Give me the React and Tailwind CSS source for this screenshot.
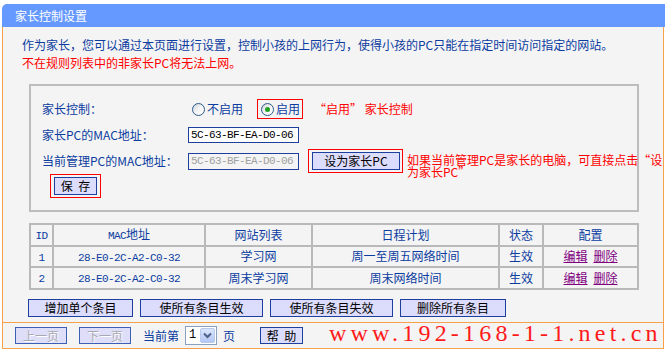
import React from "react";

const FONT = "font-['Noto_Sans_CJK_SC','Noto_Sans',sans-serif]";

function Radio({ checked }) {
  return (
    <span className="w-[13px] h-[13px] rounded-full border border-[#2d5b8c] bg-gradient-to-br from-[#cfd3d8] via-[#f4f4f4] to-white flex items-center justify-center shrink-0">
      {checked && <span className="w-[5px] h-[5px] rounded-full bg-[#22a322]" />}
    </span>
  );
}

function Btn({ children, className = "" }) {
  return (
    <div className={`h-[18px] shrink-0 border border-[#1f3f9f] bg-[#dcdcfc] text-black text-[12px] leading-[16px] flex items-center justify-center whitespace-pre ${className}`}>
      {children}
    </div>
  );
}

function DisBtn({ children, className = "" }) {
  return (
    <div className={`w-[52px] h-[17px] shrink-0 border border-[#3d5fb8] bg-[#dedef8] text-[#a9a9b4] text-[12px] leading-[15px] flex items-center justify-center [text-shadow:1px_1px_0_#ffffff] ${className}`}>
      {children}
    </div>
  );
}

function Mac({ children, className = "" }) {
  return (
    <span className={`font-['Liberation_Mono',monospace] text-[11px] tracking-[-0.6px] ${className}`}>{children}</span>
  );
}

const rows = [
  ["1", "28-E0-2C-A2-C0-32", "学习网", "周一至周五网络时间", "生效"],
  ["2", "28-E0-2C-A2-C0-32", "周末学习网", "周末网络时间", "生效"],
];

export default function App() {
  const blue = "text-[#0b3c9f]";
  const cell = "border-2 border-[#b9b9b9] h-[20px] p-0 text-center font-normal";
  return (
    <div className={`${FONT} relative w-[665px] h-[351px] bg-white overflow-hidden text-[12px]`}>
      {/* header */}
      <div className="mt-[4px] ml-[2px] h-[23px] bg-[#6699ff] rounded-tl-[5px] flex items-center pl-[13px] text-white text-[12px] leading-[23px]">
        家长控制设置
      </div>

      {/* body */}
      <div className="ml-[2px] w-[662px] h-[295px] border-x border-[#f7a24a] bg-[#f4f4f4] pt-[9px]">
        <div className={`pl-[19px] ${blue} leading-[18px]`}>
          作为家长，您可以通过本页面进行设置，控制小孩的上网行为，使得小孩的PC只能在指定时间访问指定的网站。
        </div>
        <div className="pl-[19px] text-[#ff0000] leading-[18px]">不在规则列表中的非家长PC将无法上网。</div>

        {/* inner box */}
        <div className="mt-[12px] ml-[26px] w-[610px] h-[128px] border-2 border-[#bdbdbd] pt-[10px]">
          {/* row 1 */}
          <div className="flex items-center h-[26px]">
            <div className={`w-[157px] shrink-0 pl-[11px] ${blue}`}>家长控制：</div>
            <div className="ml-[4px] shrink-0 flex items-center gap-[2px]">
              <Radio />
              <span className={blue}>不启用</span>
            </div>
            <div className="ml-[14px] shrink-0 w-[46px] h-[20px] border border-[#ff0000] flex items-center pl-[3px] gap-[2px]">
              <Radio checked />
              <span className={blue}>启用</span>
            </div>
            <div className="ml-[11px] shrink-0 text-[#ff0000]">“启用” 家长控制</div>
          </div>
          {/* row 2 */}
          <div className="flex items-center h-[26px]">
            <div className={`w-[157px] shrink-0 pl-[11px] ${blue}`}>家长PC的MAC地址：</div>
            <div className="w-[111px] shrink-0 h-[16px] border border-[#1f3f9f] bg-white flex items-center pl-[2px] text-black whitespace-nowrap">
              <Mac>5C-63-BF-EA-D0-06</Mac>
            </div>
          </div>
          {/* row 3 */}
          <div className="flex items-center h-[26px]">
            <div className={`w-[157px] shrink-0 pl-[11px] ${blue} whitespace-nowrap`}>当前管理PC的MAC地址：</div>
            <div className="w-[111px] shrink-0 h-[17px] border border-[#1f3f9f] bg-[#f4f4f4] flex items-center pl-[2px] text-[#a0a0a0] whitespace-nowrap">
              <Mac>5C-63-BF-EA-D0-06</Mac>
            </div>
            <div className="ml-[9px] shrink-0 border border-[#ff0000] pl-[3px] pr-[2px] py-[2px]">
              <Btn className="w-[88px]">设为家长PC</Btn>
            </div>
            <div className="ml-[4px] w-[256px] shrink-0 self-start mt-[6px] text-[#ff0000] leading-[12px]">
              如果当前管理PC是家长的电脑，可直接点击“设为家长PC”
            </div>
          </div>
          {/* row 4 */}
          <div className="h-[24px] flex">
            <div className="ml-[19px] border border-[#ff0000] px-[3px] py-[2px]">
              <Btn className="w-[43px]">{"保  存"}</Btn>
            </div>
          </div>
        </div>

        {/* table */}
        <table className={`mt-[11px] ml-[26px] w-[610px] border-collapse table-fixed ${blue}`}>
          <colgroup>
            <col className="w-[23px]" />
            <col className="w-[152px]" />
            <col className="w-[107px]" />
            <col className="w-[187px]" />
            <col className="w-[44px]" />
            <col />
          </colgroup>
          <thead>
            <tr>
              <th className={cell}><Mac>ID</Mac></th>
              <th className={cell}><Mac>MAC</Mac>地址</th>
              <th className={cell}>网站列表</th>
              <th className={cell}>日程计划</th>
              <th className={cell}>状态</th>
              <th className={cell}>配置</th>
            </tr>
          </thead>
          <tbody>
            {rows.map((r) => (
              <tr key={r[0]}>
                <td className={cell}><Mac>{r[0]}</Mac></td>
                <td className={cell}><Mac>{r[1]}</Mac></td>
                <td className={cell}>{r[2]}</td>
                <td className={cell}>{r[3]}</td>
                <td className={cell}>{r[4]}</td>
                <td className={cell}>
                  <span className="text-[#800080] underline">编辑</span>
                  <span className="ml-[6px] text-[#800080] underline">删除</span>
                </td>
              </tr>
            ))}
          </tbody>
        </table>

        {/* buttons */}
        <div className="mt-[9px] ml-[25px] flex gap-[7px]">
          <Btn className="w-[105px]">增加单个条目</Btn>
          <Btn className="w-[123px]">使所有条目生效</Btn>
          <Btn className="w-[123px]">使所有条目失效</Btn>
          <Btn className="w-[106px]">删除所有条目</Btn>
        </div>
      </div>

      {/* footer */}
      <div className="ml-[2px] w-[662px] h-[27px] border border-[#f7a24a] bg-[#f4f4f4] flex items-center pl-[12px]">
        <DisBtn>上一页</DisBtn>
        <DisBtn className="ml-[12px]">下一页</DisBtn>
        <span className={`ml-[12px] ${blue}`}>当前第</span>
        <div className="ml-[6px] w-[32px] h-[19px] border border-[#8aa0bf] bg-white flex items-center">
          <span className="pl-[3px] flex-1 text-black font-['Liberation_Mono',monospace] text-[12px] leading-[17px]">1</span>
          <span className="mr-[1px] w-[15px] h-[15px] rounded-[2px] border border-[#b8c9ee] bg-gradient-to-b from-[#dbe6fd] to-[#b3c6f3] flex items-center justify-center">
            <svg width="9" height="7" viewBox="0 0 9 7">
              <path d="M1 1.5 L4.5 5 L8 1.5" fill="none" stroke="#4d6185" strokeWidth="2" />
            </svg>
          </span>
        </div>
        <span className={`ml-[6px] ${blue}`}>页</span>
        <Btn className="ml-[25px] w-[43px] !h-[17px]">{"帮  助"}</Btn>
      </div>

      {/* watermark */}
      <div className="absolute top-[321px] left-[329px] text-[#ff1a1a] font-['Liberation_Serif',serif] text-[24px] leading-[24px] tracking-[4.2px] whitespace-nowrap">
        www.192-168-1-1.net.c<span className="tracking-normal">n</span>
      </div>
    </div>
  );
}
